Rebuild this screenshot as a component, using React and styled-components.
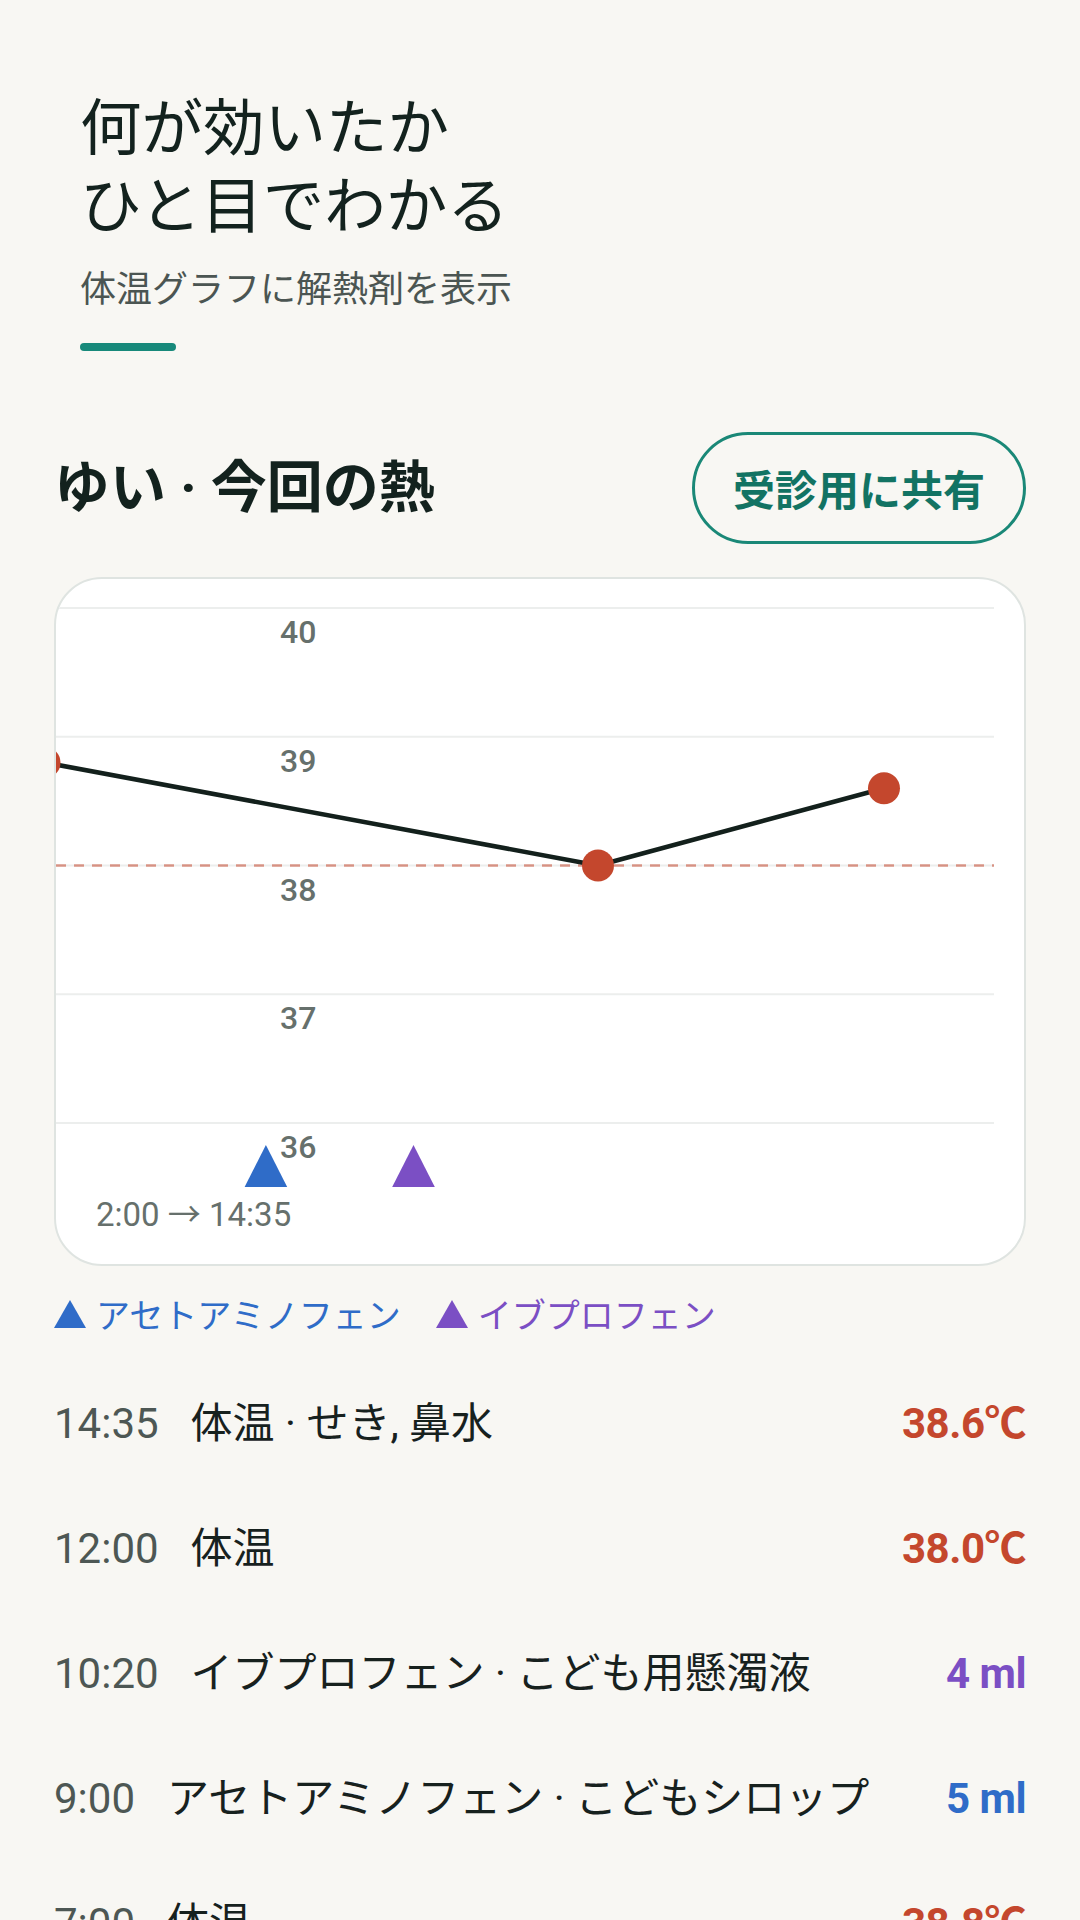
import React from "react";
import styled, { createGlobalStyle } from "styled-components";

const Global = createGlobalStyle`
  html, body { margin: 0; padding: 0; }
  body {
    background: #f8f7f3;
    font-family: Roboto, "Noto Sans CJK JP", sans-serif;
    color: #14211d;
  }
`;

const Page = styled.div`
  width: 1080px;
  box-sizing: border-box;
  padding: 0 54px;
`;

const Hero = styled.header`
  padding: 85px 26px 0 26px;
`;

const Title = styled.h1`
  margin: 0;
  font-family: "Noto Sans CJK JP", sans-serif;
  font-weight: 400;
  font-size: 61.5px;
  line-height: 78px;
  color: #13221e;
`;

const Subtitle = styled.p`
  margin: 20px 0 0 0;
  font-family: "Noto Sans CJK JP", sans-serif;
  font-size: 36px;
  line-height: 50px;
  color: #4b5552;
`;

const AccentBar = styled.div`
  margin-top: 32px;
  width: 96px;
  height: 8px;
  border-radius: 4px;
  background: #17897a;
`;

const HeaderRow = styled.div`
  margin-top: 81px;
  display: flex;
  align-items: center;
  justify-content: space-between;
`;

const Heading = styled.h2`
  margin: 0;
  font-size: 56px;
  line-height: 64px;
  font-weight: 700;
  color: #13221e;
`;

const ShareButton = styled.button`
  box-sizing: border-box;
  height: 112px;
  padding: 0 38px;
  border: 3px solid #1a8877;
  border-radius: 56px;
  background: transparent;
  font-family: "Noto Sans CJK JP", sans-serif;
  font-size: 42px;
  font-weight: 700;
  line-height: 50px;
  color: #127363;
`;

const Card = styled.section`
  margin-top: 33px;
  box-sizing: border-box;
  height: 689px;
  border: 2px solid #dfe4e1;
  border-radius: 48px;
  background: #ffffff;
  overflow: hidden;
`;

const ChartSvg = styled.svg`
  display: block;
`;

const Legend = styled.div`
  margin-top: 28px;
  display: flex;
  align-items: center;
  gap: 35px;
  height: 40px;
`;

const LegendItem = styled.div`
  display: flex;
  align-items: center;
  gap: 10px;
  font-family: "Noto Sans CJK JP", sans-serif;
  font-size: 34px;
  line-height: 40px;
  color: ${(p) => p.$color};
`;

const List = styled.ul`
  list-style: none;
  margin: 27px 0 0 0;
  padding: 0;
`;

const Row = styled.li`
  display: flex;
  align-items: center;
  gap: 32px;
  height: 125px;
  font-size: 42px;
  line-height: 50px;
`;

const Time = styled.span`
  color: #4d5754;
`;

const Desc = styled.span`
  color: #17211e;
`;

const Value = styled.span`
  margin-left: auto;
  font-weight: 700;
  letter-spacing: -0.5px;
  color: ${(p) => p.$color};
`;

const RED = "#c4472d";
const BLUE = "#2f6cc8";
const PURPLE = "#7b4fc4";

const W = 968;
const H = 685;
const yOf = (t) => 29 + (40 - t) * 128.75;
const xOf = (min) => -11.5 + (min - 420) * 1.845;

const points = [
  { m: 420, t: 38.8 },
  { m: 720, t: 38.0 },
  { m: 875, t: 38.6 },
];

const doses = [
  { m: 540, color: BLUE },
  { m: 620, color: PURPLE },
];

function Triangle({ color, size = 32 }) {
  return (
    <svg width={size} height={size * 0.875} viewBox="0 0 32 28">
      <path d="M16 0 L32 28 L0 28 Z" fill={color} />
    </svg>
  );
}

function Chart() {
  const grid = [40, 39, 38, 37, 36];
  const path = points.map((p, i) => `${i ? "L" : "M"}${xOf(p.m)} ${yOf(p.t)}`).join(" ");
  return (
    <ChartSvg width={W} height={H} viewBox={`0 0 ${W} ${H}`}>
      {grid.map((g) => (
        <g key={g}>
          <line x1="0" x2="938" y1={yOf(g)} y2={yOf(g)} stroke="#eceeed" strokeWidth="2" />
          <text
            x="224"
            y={yOf(g) + 35}
            fontFamily="Roboto, sans-serif"
            fontSize="32"
            fontWeight="500"
            fill="#66706c"
          >
            {g}
          </text>
        </g>
      ))}
      <line
        x1="0"
        x2="938"
        y1={yOf(38)}
        y2={yOf(38)}
        stroke={RED}
        strokeOpacity="0.55"
        strokeWidth="2.5"
        strokeDasharray="10 8"
      />
      <path d={path} fill="none" stroke="#13201c" strokeWidth="4.5" strokeLinejoin="round" />
      {points.map((p) => (
        <circle key={p.m} cx={xOf(p.m)} cy={yOf(p.t)} r="16" fill={RED} />
      ))}
      {doses.map((d) => {
        const x = xOf(d.m);
        return <path key={d.m} d={`M${x - 21.3} 608 L${x + 21.3} 608 L${x} 566 Z`} fill={d.color} />;
      })}
      <text
        x="40"
        y="647"
        fontFamily="Roboto, 'Noto Sans CJK JP', sans-serif"
        fontSize="33"
        fill="#66706c"
      >
        2:00 → 14:35
      </text>
    </ChartSvg>
  );
}

const entries = [
  { time: "14:35", desc: "体温 · せき, 鼻水", value: "38.6℃", color: RED },
  { time: "12:00", desc: "体温", value: "38.0℃", color: RED },
  { time: "10:20", desc: "イブプロフェン · こども用懸濁液", value: "4 ml", color: PURPLE },
  { time: "9:00", desc: "アセトアミノフェン · こどもシロップ", value: "5 ml", color: BLUE },
  { time: "7:00", desc: "体温", value: "38.8℃", color: RED },
];

export default function App() {
  return (
    <>
      <Global />
      <Page>
        <Hero>
          <Title>
            何が効いたか
            <br />
            ひと目でわかる
          </Title>
          <Subtitle>体温グラフに解熱剤を表示</Subtitle>
          <AccentBar />
        </Hero>
        <HeaderRow>
          <Heading>ゆい · 今回の熱</Heading>
          <ShareButton>受診用に共有</ShareButton>
        </HeaderRow>
        <Card>
          <Chart />
        </Card>
        <Legend>
          <LegendItem $color={BLUE}>
            <Triangle color={BLUE} />
            アセトアミノフェン
          </LegendItem>
          <LegendItem $color={PURPLE}>
            <Triangle color={PURPLE} />
            イブプロフェン
          </LegendItem>
        </Legend>
        <List>
          {entries.map((e) => (
            <Row key={e.time}>
              <Time>{e.time}</Time>
              <Desc>{e.desc}</Desc>
              <Value $color={e.color}>{e.value}</Value>
            </Row>
          ))}
        </List>
      </Page>
    </>
  );
}
